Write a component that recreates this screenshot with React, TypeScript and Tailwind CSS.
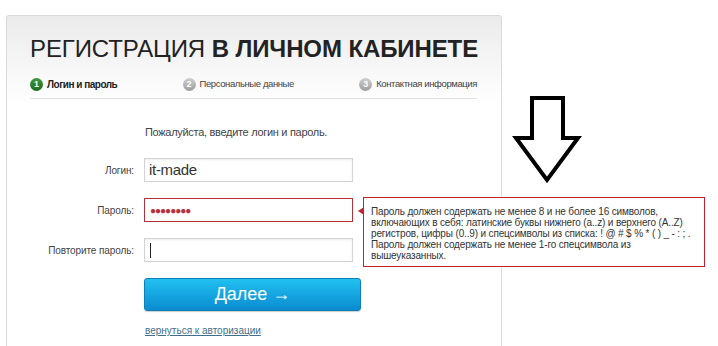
export default function App() {
  const steps = [
    { n: 1, label: "Логин и пароль", active: true },
    { n: 2, label: "Персональные данные", active: false },
    { n: 3, label: "Контактная информация", active: false },
  ];

  return (
    <div className="relative w-[718px] h-[346px] overflow-hidden bg-white font-['Liberation_Sans',Arial,sans-serif]">
      {/* карточка регистрации */}
      <div className="ml-[6px] mt-[15px] w-[496px] h-[400px] border border-[#dadada] rounded-t-[3px] bg-gradient-to-b from-[#ebebeb] via-white via-[22%] to-white">
        <div className="px-[23px] pt-[18px]">
          <h1 className="text-[24px] leading-[30px] text-[#222] tracking-[-0.1px] whitespace-nowrap">
            РЕГИСТРАЦИЯ <span className="font-bold">В ЛИЧНОМ КАБИНЕТЕ</span>
          </h1>

          <div className="mt-[13px] pb-[6px] border-b border-[#e2e2e2] flex justify-between items-center w-[447px]">
            {steps.map(s => (
              <div key={s.n} className="flex items-center gap-[4px]">
                <span
                  className={
                    s.active
                      ? "w-[13px] h-[13px] rounded-full bg-gradient-to-b from-[#3d9a3d] to-[#1d6b1d] text-white text-[9px] font-bold flex items-center justify-center"
                      : "w-[13px] h-[13px] rounded-full bg-gradient-to-b from-[#cfcfcf] to-[#9d9d9d] text-white text-[9px] font-bold flex items-center justify-center"
                  }
                >
                  {s.n}
                </span>
                <span className={s.active ? "text-[10px] tracking-[-0.5px] font-bold text-[#222]" : "text-[9.5px] tracking-[-0.4px] text-[#444]"}>
                  {s.label}
                </span>
              </div>
            ))}
          </div>

          <p className="mt-[26px] ml-[115px] text-[11px] leading-[14px] tracking-[-0.3px] text-[#444]">
            Пожалуйста, введите логин и пароль.
          </p>

          <div className="mt-[19px] grid grid-cols-[104px_209px] gap-x-[10px] gap-y-[16px] items-center">
            <label className="text-right text-[10px] tracking-[-0.1px] text-[#444]">Логин:</label>
            <div className="h-[24px] border border-[#d4d4d4] bg-white shadow-[inset_0_1px_2px_rgba(0,0,0,0.08)] flex items-center px-[4px] text-[15px] tracking-[-0.3px] text-[#333]">
              it-made
            </div>

            <label className="text-right text-[10px] tracking-[-0.1px] text-[#444]">Пароль:</label>
            <div className="relative h-[24px] border border-[#b8303a] bg-white flex items-center px-[5px] text-[10px] text-[#b8303a] tracking-[-1px]">
              ●●●●●●●●
              {/* подсказка */}
              <div className="absolute left-[218px] top-[-2px] w-[342px] h-[70px] border border-[#c4222d] bg-white px-[7px] pt-[8px] text-[10px] leading-[11px] text-[#333] tracking-[-0.15px] whitespace-nowrap z-10">
                <span className="absolute left-[-6px] top-[9px] w-0 h-0 border-y-[4px] border-y-transparent border-r-[6px] border-r-[#c4222d]" />
                Пароль должен содержать не менее 8 и не более 16 символов,
                <br />
                включающих в себя: латинские буквы нижнего (a..z) и верхнего (A..Z)
                <br />
                регистров, цифры (0..9) и спецсимволы из списка: ! @ # $ % * ( ) _ - : ; .
                <br />
                Пароль должен содержать не менее 1-го спецсимвола из
                <br />
                вышеуказанных.
              </div>
            </div>

            <label className="text-right text-[10px] tracking-[-0.1px] text-[#444]">Повторите пароль:</label>
            <div className="h-[24px] border border-[#d4d4d4] bg-white shadow-[inset_0_1px_2px_rgba(0,0,0,0.08)] flex items-center px-[5px]">
              <span className="w-px h-[15px] bg-[#222]" />
            </div>

            <div />
            <button className="w-[217px] h-[33px] rounded-[3px] border border-[#0d7fb8] bg-gradient-to-b from-[#22c0f0] to-[#0a8cd0] text-white text-[18px] flex items-center justify-center shadow-[0_1px_1px_rgba(0,0,0,0.2)]">
              Далее →
            </button>
          </div>

          <a href="#" className="block mt-[12px] ml-[115px] text-[10px] text-[#3e6f8e] underline">
            вернуться к авторизации
          </a>
        </div>
      </div>

      {/* стрелка-аннотация */}
      <svg className="absolute left-[510px] top-[94px]" width="74" height="92" viewBox="0 0 74 92">
        <path
          d="M22 4 H53 V44 H68 L37 86 L6 44 H22 Z"
          fill="white"
          stroke="black"
          strokeWidth="4"
          strokeLinejoin="miter"
        />
      </svg>
    </div>
  );
}
